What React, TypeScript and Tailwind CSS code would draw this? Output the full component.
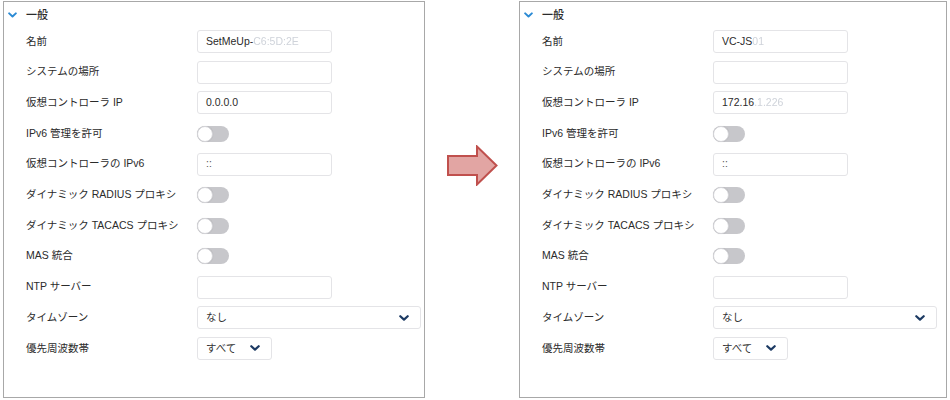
import React from "react";

type Row =
  | { kind: "input"; label: string; value?: string; faded?: string; light?: boolean }
  | { kind: "toggle"; label: string }
  | { kind: "select"; label: string; value: string; small?: boolean };

const Chevron = ({ className }: { className: string }) => (
  <svg
    viewBox="0 0 10 6"
    className={className}
    fill="none"
    stroke="currentColor"
    strokeWidth={2.2}
    strokeLinecap="round"
    strokeLinejoin="round"
  >
    <path d="M1.3 1.2 5 4.6 8.7 1.2" />
  </svg>
);

const Toggle = () => (
  <div className="relative w-[32px] h-[16px] rounded-full bg-[#c7c7cb]">
    <div className="absolute left-0 top-0 w-[16px] h-[16px] rounded-full bg-white border border-[#d4d4d8] shadow-[0_0_1px_rgba(0,0,0,0.15)]" />
  </div>
);

const leftRows: Row[] = [
  { kind: "input", label: "名前", value: "SetMeUp-", faded: "C6:5D:2E" },
  { kind: "input", label: "システムの場所" },
  { kind: "input", label: "仮想コントローラ IP", value: "0.0.0.0" },
  { kind: "toggle", label: "IPv6 管理を許可" },
  { kind: "input", label: "仮想コントローラの IPv6", value: "::", light: true },
  { kind: "toggle", label: "ダイナミック RADIUS プロキシ" },
  { kind: "toggle", label: "ダイナミック TACACS プロキシ" },
  { kind: "toggle", label: "MAS 統合" },
  { kind: "input", label: "NTP サーバー" },
  { kind: "select", label: "タイムゾーン", value: "なし" },
  { kind: "select", label: "優先周波数帯", value: "すべて", small: true },
];

const rightRows: Row[] = leftRows.map((r) => {
  if (r.label === "名前") return { ...r, value: "VC-JS", faded: "01" } as Row;
  if (r.label === "仮想コントローラ IP") return { ...r, value: "172.16", faded: ".1.226" } as Row;
  return r;
});

const Field = ({ row }: { row: Row }) => {
  if (row.kind === "toggle") return <Toggle />;
  if (row.kind === "select")
    return (
      <div
        className={`h-[23px] ${row.small ? "w-[75px]" : "w-[224px]"} border border-[#e4e4e7] rounded-[3px] bg-white flex items-center justify-between pl-[8px] pr-[11px]`}
      >
        <span className="text-[#333]">{row.value}</span>
        <Chevron className="w-[10px] h-[6px] text-[#1c3a63]" />
      </div>
    );
  return (
    <div className="h-[23px] w-[135px] border border-[#e4e4e7] rounded-[3px] bg-white flex items-center px-[8px]">
      <span className={row.light ? "text-[#555]" : "text-[#2b2b2b]"}>{row.value}</span>
      {row.faded && <span className="text-[#cfd3da] blur-[0.6px]">{row.faded}</span>}
    </div>
  );
};

const Panel = ({ rows, width }: { rows: Row[]; width: string }) => (
  <div className={`${width} h-[397px] border border-[#a8a8a8] bg-white`}>
    <div className="flex items-center h-[14px] mt-[6px] pl-[4px] gap-[9px]">
      <Chevron className="w-[9px] h-[6px] text-[#2a8ad4]" />
      <span className="text-[11px] font-medium text-[#2b2b2b]">一般</span>
    </div>
    <div className="flex flex-col gap-[7.7px] mt-[8px] pl-[22px]">
      {rows.map((row) => (
        <div key={row.label} className="flex items-center h-[23px]">
          <div className="w-[171px] text-[#2b2b2b]">{row.label}</div>
          <Field row={row} />
        </div>
      ))}
    </div>
  </div>
);

const Arrow = () => (
  <svg viewBox="0 0 51 41" className="w-[51px] h-[41px] mt-[144px]">
    <polygon
      points="1,11 30,11 30,1.5 49.5,20.5 30,39.5 30,30 1,30"
      fill="#e2a5a3"
      stroke="#c0504d"
      strokeWidth={2}
    />
  </svg>
);

export default function App() {
  return (
    <div
      className="w-[950px] h-[400px] bg-white flex items-start pl-[3px] pt-[1px] text-[10.5px]"
      style={{ fontFamily: "'Liberation Sans', 'Noto Sans CJK JP', sans-serif" }}
    >
      <Panel rows={leftRows} width="w-[422px]" />
      <div className="w-[94px] flex justify-center">
        <Arrow />
      </div>
      <Panel rows={rightRows} width="w-[428px]" />
    </div>
  );
}
